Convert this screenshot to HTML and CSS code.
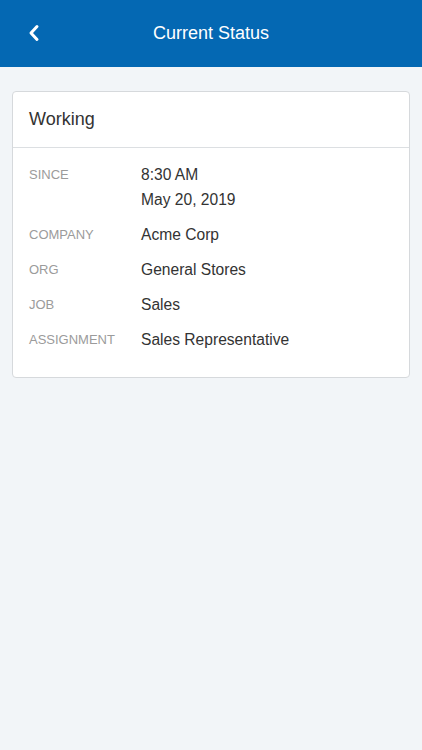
FILE: index.html
```html
<!DOCTYPE html>
<html lang="en">
<head>
<meta charset="utf-8">
<meta name="viewport" content="width=device-width, initial-scale=1">
<title>Current Status</title>
<link rel="stylesheet" href="styles.css">
</head>
<body>
<header class="topbar">
  <button class="back" aria-label="Back">
    <svg width="16" height="20" viewBox="0 0 16 20" aria-hidden="true">
      <polyline points="10,3.5 4,10 10,16.5" fill="none" stroke="#ffffff" stroke-width="3" stroke-linecap="round" stroke-linejoin="round"/>
    </svg>
  </button>
  <h1 class="title">Current Status</h1>
</header>
<main class="content">
  <section class="card">
    <div class="card-head">Working</div>
    <div class="card-body">
      <div class="row">
        <div class="label">SINCE</div>
        <div class="value">8:30 AM<br>May 20, 2019</div>
      </div>
      <div class="row">
        <div class="label">COMPANY</div>
        <div class="value">Acme Corp</div>
      </div>
      <div class="row">
        <div class="label">ORG</div>
        <div class="value">General Stores</div>
      </div>
      <div class="row">
        <div class="label">JOB</div>
        <div class="value">Sales</div>
      </div>
      <div class="row">
        <div class="label">ASSIGNMENT</div>
        <div class="value">Sales Representative</div>
      </div>
    </div>
  </section>
</main>
</body>
</html>
```
FILE: styles.css
```css
html, body {
  margin: 0;
  padding: 0;
}
body {
  background: #f2f5f8;
  font-family: "Liberation Sans", Arial, Helvetica, sans-serif;
  min-height: 750px;
}
.topbar {
  height: 67px;
  background: #0468b3;
  display: flex;
  align-items: center;
  justify-content: center;
  position: relative;
}
.back {
  position: absolute;
  left: 27px;
  top: 23px;
  width: 16px;
  height: 20px;
  padding: 0;
  border: 0;
  background: transparent;
  display: flex;
}
.title {
  margin: 0;
  color: #ffffff;
  font-size: 18px;
  font-weight: normal;
  line-height: 22px;
  margin-top: -1px;
}
.content {
  padding: 24px 12px;
}
.card {
  background: #ffffff;
  border: 1px solid #d6d9dc;
  border-radius: 4px;
}
.card-head {
  height: 55px;
  display: flex;
  align-items: center;
  padding: 0 16px;
  font-size: 18px;
  color: #333333;
  border-bottom: 1px solid #dcdfe2;
}
.card-body {
  padding: 14px 16px 15px;
}
.row {
  display: grid;
  grid-template-columns: 112px 1fr;
  align-items: start;
  margin-bottom: 10px;
}
.label {
  font-size: 13px;
  line-height: 25px;
  color: #9b9b9b;
}
.value {
  font-size: 15.6px;
  line-height: 25px;
  color: #333333;
}
```
